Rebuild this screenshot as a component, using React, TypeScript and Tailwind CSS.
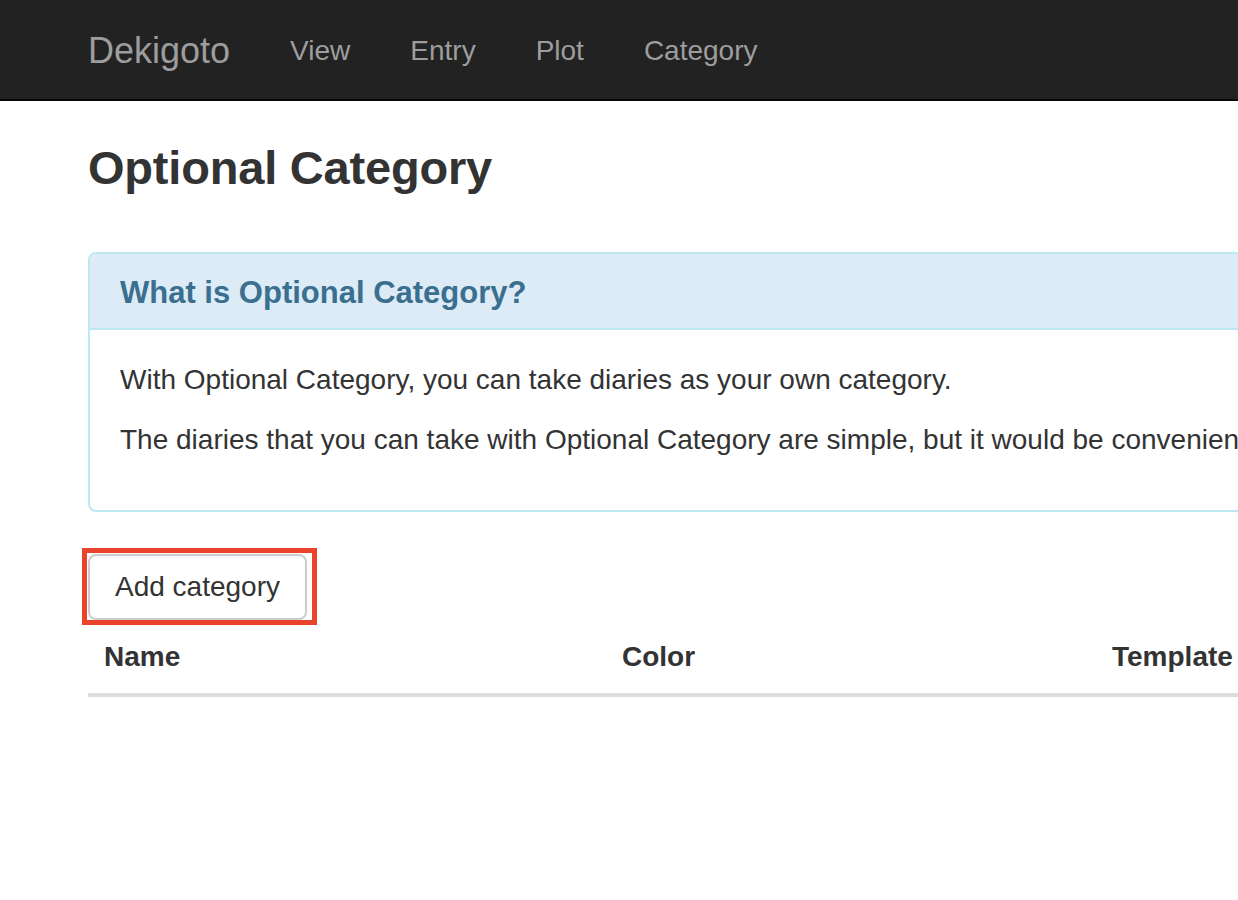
const navItems = ['View', 'Entry', 'Plot', 'Category']

const columns = [
  { label: 'Name', width: 'w-[518px]' },
  { label: 'Color', width: 'w-[490px]' },
  { label: 'Template', width: 'w-[400px]' },
]

const App = () => {
  return (
    <div className="w-[1238px] h-[900px] overflow-hidden bg-white text-[#333] font-['Liberation_Sans',Arial,sans-serif]">
      {/* navbar */}
      <nav className="h-[101px] bg-[#222] border-b-2 border-[#080808]">
        <div className="flex items-center h-full pl-[88px] pt-[2px]">
          <a href="#" className="text-[36px] leading-none text-[#9d9d9d] pr-[30px]">
            Dekigoto
          </a>
          <ul className="flex">
            {navItems.map((item) => (
              <li key={item}>
                <a href="#" className="block px-[30px] text-[28px] leading-none text-[#9d9d9d]">
                  {item}
                </a>
              </li>
            ))}
          </ul>
        </div>
      </nav>

      <div className="w-[1700px] pl-[88px]">
        <h1 className="mt-[40px] mb-[58px] text-[47px] leading-[53px] font-bold tracking-[-0.2px]">Optional Category</h1>

        {/* info panel */}
        <div className="border-2 border-[#bce8f1] rounded-[8px] mb-[42px]">
          <div className="bg-[#dcebf6] border-b-2 border-[#bce8f1] rounded-t-[6px] px-[30px] pt-[21px] pb-[18px]">
            <h3 className="text-[31px] leading-[35px] font-bold text-[#3a6f8f]">What is Optional Category?</h3>
          </div>
          <div className="p-[30px] text-[28px] leading-[40px] whitespace-nowrap">
            <p className="mb-[20px]">With Optional Category, you can take diaries as your own category.</p>
            <p className="mb-[20px]">
              The diaries that you can take with Optional Category are simple, but it would be convenient.
            </p>
          </div>
        </div>

        {/* add button */}
        <div className="relative inline-block align-top">
          <button className="block h-[66px] px-[25px] border-2 border-[#ccc] rounded-[8px] bg-white text-[28px] leading-[40px] text-[#333]">
            Add category
          </button>
          <span className="absolute -left-[6px] -top-[6px] -right-[10px] -bottom-[5px] border-[5px] border-[#e9442b] pointer-events-none" />
        </div>

        {/* table */}
        <table className="border-collapse w-[1408px] mt-[1px]">
          <thead>
            <tr className="border-b-4 border-[#ddd]">
              {columns.map((col) => (
                <th key={col.label} className={`${col.width} px-[16px] py-[16px] text-left text-[28px] leading-[40px] font-bold`}>
                  {col.label}
                </th>
              ))}
            </tr>
          </thead>
        </table>
      </div>
    </div>
  )
}

export default App
